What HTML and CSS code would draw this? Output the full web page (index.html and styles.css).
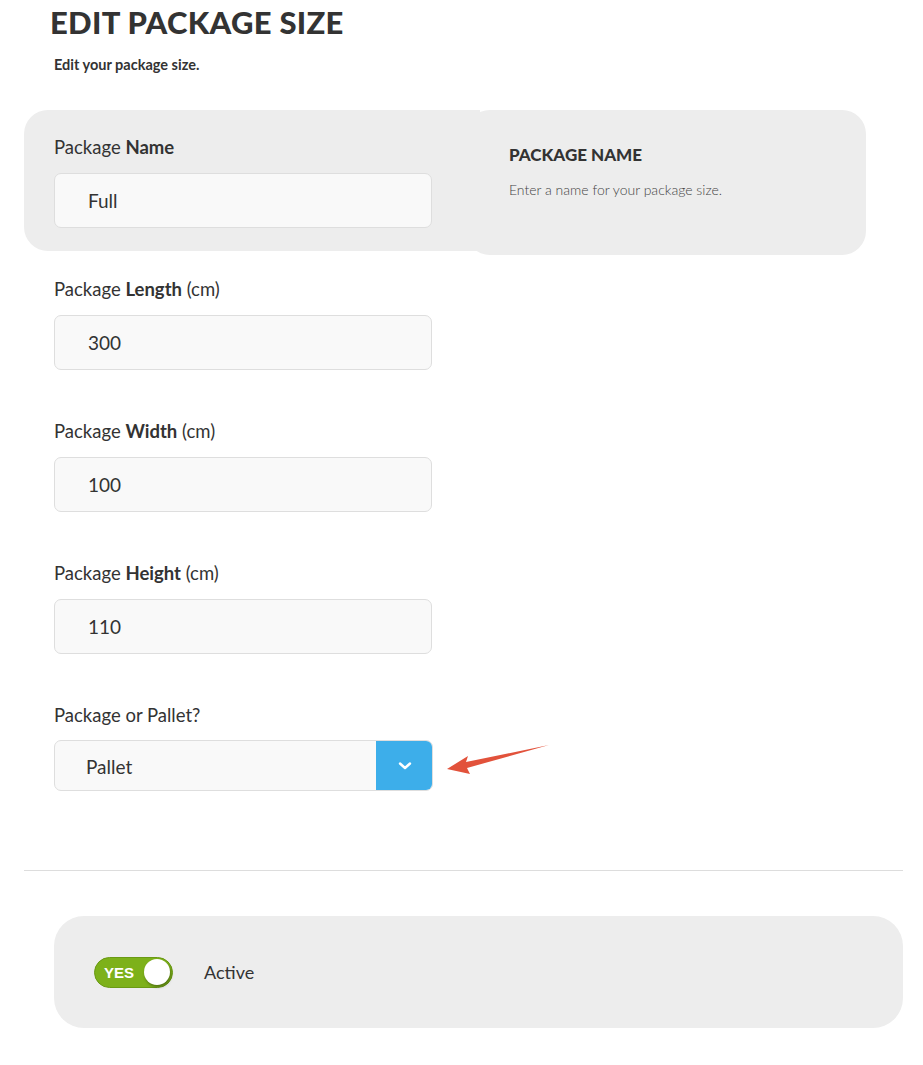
FILE: index.html
```html
<!DOCTYPE html>
<html>
<head>
<meta charset="utf-8">
<link rel="stylesheet" href="styles.css">
</head>
<body>
<div class="page">
  <header class="head">
    <h1 class="title">EDIT PACKAGE SIZE</h1>
    <p class="subtitle">Edit your package size.</p>
  </header>

  <div class="form">
    <div class="row-active">
      <div class="field field-hl">
        <label class="label">Package <b>Name</b></label>
        <div class="input">Full</div>
      </div>
      <div class="help">
        <h3 class="help-title">PACKAGE NAME</h3>
        <p class="help-text">Enter a name for your package size.</p>
      </div>
    </div>

    <div class="field">
      <label class="label">Package <b>Length</b> (cm)</label>
      <div class="input">300</div>
    </div>
    <div class="field">
      <label class="label">Package <b>Width</b> (cm)</label>
      <div class="input">100</div>
    </div>
    <div class="field">
      <label class="label">Package <b>Height</b> (cm)</label>
      <div class="input">110</div>
    </div>
    <div class="field field-select">
      <label class="label">Package or Pallet?</label>
      <div class="select-wrap">
        <div class="select">
          <span class="select-value">Pallet</span>
          <span class="select-btn">
            <svg width="14" height="10" viewBox="0 0 14 10"><path d="M2 2.5 L7 7 L12 2.5" fill="none" stroke="#fff" stroke-width="2.4" stroke-linecap="round" stroke-linejoin="round"/></svg>
          </span>
        </div>
        <svg class="arrow" width="106" height="32" viewBox="0 0 106 32">
          <path d="M103 1 L20 18 L22 12 L1 25 L24 30 L21 24 Z" fill="#e2523b"/>
        </svg>
      </div>
    </div>
  </div>

  <hr class="divider">

  <div class="bottom">
    <div class="toggle">
      <span class="toggle-text">YES</span>
      <span class="knob"></span>
    </div>
    <span class="active-label">Active</span>
  </div>
</div>
</body>
</html>
```
FILE: styles.css
```css
* { box-sizing: border-box; }
html, body { margin: 0; padding: 0; background: #fff; }
body {
  font-family: "Lato", "Liberation Sans", sans-serif;
  color: #333;
}
.page {
  padding: 0 20px 0 24px;
}
.head {
  padding: 4px 0 0 26px;
  height: 110px;
}
.title {
  margin: 0;
  font-size: 31px;
  font-weight: 900;
  letter-spacing: 0.3px;
  line-height: 36px;
  color: #333;
}
.subtitle {
  margin: 16px 0 0 4px;
  font-size: 14.5px;
  font-weight: 700;
  color: #333;
}
.form { width: 842px; }
.row-active {
  display: flex;
  align-items: flex-start;
  height: 142px;
}
.field {
  width: 456px;
  height: 142px;
  padding: 25px 24px 0 30px;
}
.field-hl {
  background: #ededed;
  border-radius: 24px 0 0 24px;
  height: 141px;
  position: relative;
  z-index: 1;
}
.help {
  margin-left: -14px;
  width: 400px;
  height: 145px;
  background: #ededed;
  border-radius: 24px;
  padding: 35px 20px 0 43px;
}
.help-title {
  margin: 0;
  font-size: 17px;
  font-weight: 900;
  line-height: 20px;
  color: #333;
}
.help-text {
  margin: 16px 0 0;
  font-size: 14px;
  font-weight: 300;
  color: #444;
}
.label {
  display: block;
  font-size: 18.5px;
  line-height: 24px;
  height: 24px;
  margin-bottom: 14px;
  font-weight: 400;
  color: #333;
  white-space: nowrap;
}
.label b { font-weight: 700; }
.input {
  height: 55px;
  width: 378px;
  background: #f9f9f9;
  border: 1px solid #dedede;
  border-radius: 7px;
  padding-left: 33px;
  font-size: 19px;
  line-height: 53px;
  color: #333;
}
.field-select .label { margin-bottom: 13px; }
.select-wrap {
  position: relative;
  width: 379px;
}
.select {
  display: flex;
  width: 379px;
  height: 51px;
  background: #f9f9f9;
  border: 1px solid #dedede;
  border-radius: 7px;
  overflow: hidden;
}
.select-value {
  flex: 1;
  padding-left: 31px;
  font-size: 19px;
  line-height: 51px;
}
.select-btn {
  width: 57px;
  margin: -1px -1px -1px 0;
  background: #3daeea;
  display: flex;
  align-items: center;
  justify-content: center;
  border-radius: 0 7px 7px 0;
}
.arrow {
  position: absolute;
  left: 392px;
  top: 4px;
}
.divider {
  margin: 50px 0 0 0;
  border: 0;
  border-top: 1px solid #dddddd;
  height: 0;
}
.bottom {
  margin: 45px 0 0 30px;
  height: 112px;
  background: #ededed;
  border-radius: 30px;
  display: flex;
  align-items: center;
  padding-left: 40px;
}
.toggle {
  width: 79px;
  height: 31px;
  border-radius: 16px;
  background: #7db11a;
  border: 1px solid #6a9a14;
  display: flex;
  align-items: center;
  justify-content: space-between;
  padding: 0 2px 0 9px;
}
.toggle-text {
  font-family: "Liberation Sans", Arial, sans-serif;
  font-weight: 700;
  font-size: 15px;
  color: #fff;
}
.knob {
  width: 26px;
  height: 26px;
  border-radius: 50%;
  background: #fff;
  box-shadow: 1px 2px 3px rgba(0,0,0,0.35);
}
.active-label {
  margin-left: 31px;
  font-size: 18px;
  color: #333;
}
```
